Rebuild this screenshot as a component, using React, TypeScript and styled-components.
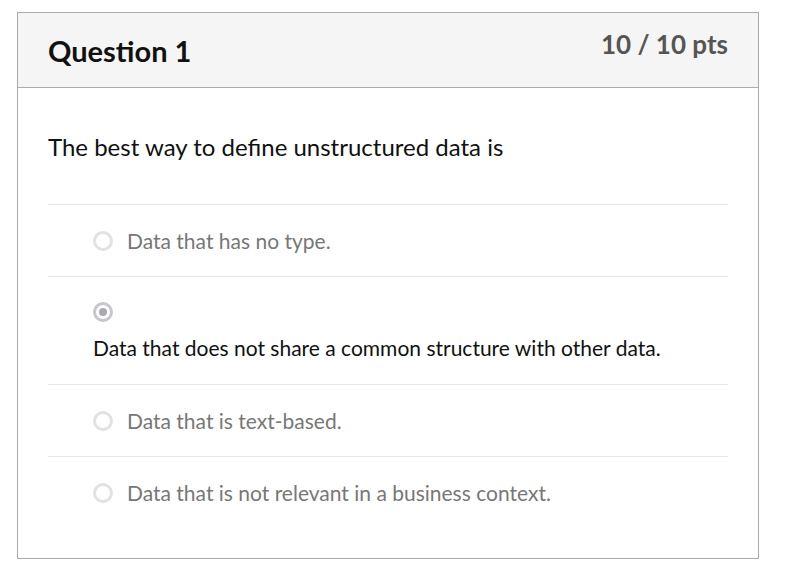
import styled, { createGlobalStyle } from "styled-components";

const GlobalStyle = createGlobalStyle`
  body {
    margin: 0;
    background: #fff;
    font-family: Lato, "Noto Sans", sans-serif;
  }
`;

type Answer = {
  text: string;
  selected?: boolean;
};

const answers: Answer[] = [
  { text: "Data that has no type." },
  { text: "Data that does not share a common structure with other data.", selected: true },
  { text: "Data that is text-based." },
  { text: "Data that is not relevant in a business context." },
];

const Page = styled.div`
  padding: 12px 0 0 17px;
`;

const Card = styled.div`
  width: 740px;
  border: 1px solid #aaaaaa;
  background: #fff;
`;

const Header = styled.div`
  display: flex;
  justify-content: space-between;
  align-items: flex-start;
  height: 75px;
  box-sizing: border-box;
  padding: 16px 30px 0 30px;
  background: #f5f5f5;
  border-bottom: 1px solid #aaaaaa;
`;

const Title = styled.h2`
  margin: 5px 0 0 0;
  font-size: 29px;
  line-height: 1.2;
  font-weight: 700;
  color: #111;
`;

const Points = styled.div`
  font-size: 26px;
  line-height: 1.2;
  font-weight: 700;
  color: #555555;
`;

const Body = styled.div`
  padding: 43px 30px 30px 30px;
`;

const QuestionText = styled.p`
  margin: 0 0 41px 0;
  font-size: 24px;
  line-height: 32px;
  color: #111;
`;

const Row = styled.div<{ selected?: boolean }>`
  display: flex;
  flex-direction: ${({ selected }) => (selected ? "column" : "row")};
  align-items: ${({ selected }) => (selected ? "flex-start" : "center")};
  gap: ${({ selected }) => (selected ? "12px" : "14px")};
  box-sizing: border-box;
  min-height: 72px;
  padding: ${({ selected }) => (selected ? "25px 0 22px 45px" : "0 0 0 45px")};
  border-top: 1px solid #e8e8e8;
`;

const Radio = styled.span<{ selected?: boolean }>`
  display: flex;
  align-items: center;
  justify-content: center;
  flex: none;
  width: 20px;
  height: 20px;
  box-sizing: border-box;
  border-radius: 50%;
  border: 3px solid ${({ selected }) => (selected ? "#c6c6cc" : "#e2e2e5")};
  background: #fff;

  &::after {
    content: "";
    display: ${({ selected }) => (selected ? "block" : "none")};
    width: 8px;
    height: 8px;
    border-radius: 50%;
    background: #a9a9b1;
  }
`;

const AnswerText = styled.span<{ selected?: boolean }>`
  font-size: 21px;
  line-height: 28px;
  color: ${({ selected }) => (selected ? "#111" : "#777777")};
`;

export default function App() {
  return (
    <Page>
      <GlobalStyle />
      <Card>
        <Header>
          <Title>Question 1</Title>
          <Points>10 / 10 pts</Points>
        </Header>
        <Body>
          <QuestionText>The best way to define unstructured data is</QuestionText>
          {answers.map((a) => (
            <Row key={a.text} selected={a.selected}>
              <Radio selected={a.selected} />
              <AnswerText selected={a.selected}>{a.text}</AnswerText>
            </Row>
          ))}
        </Body>
      </Card>
    </Page>
  );
}
